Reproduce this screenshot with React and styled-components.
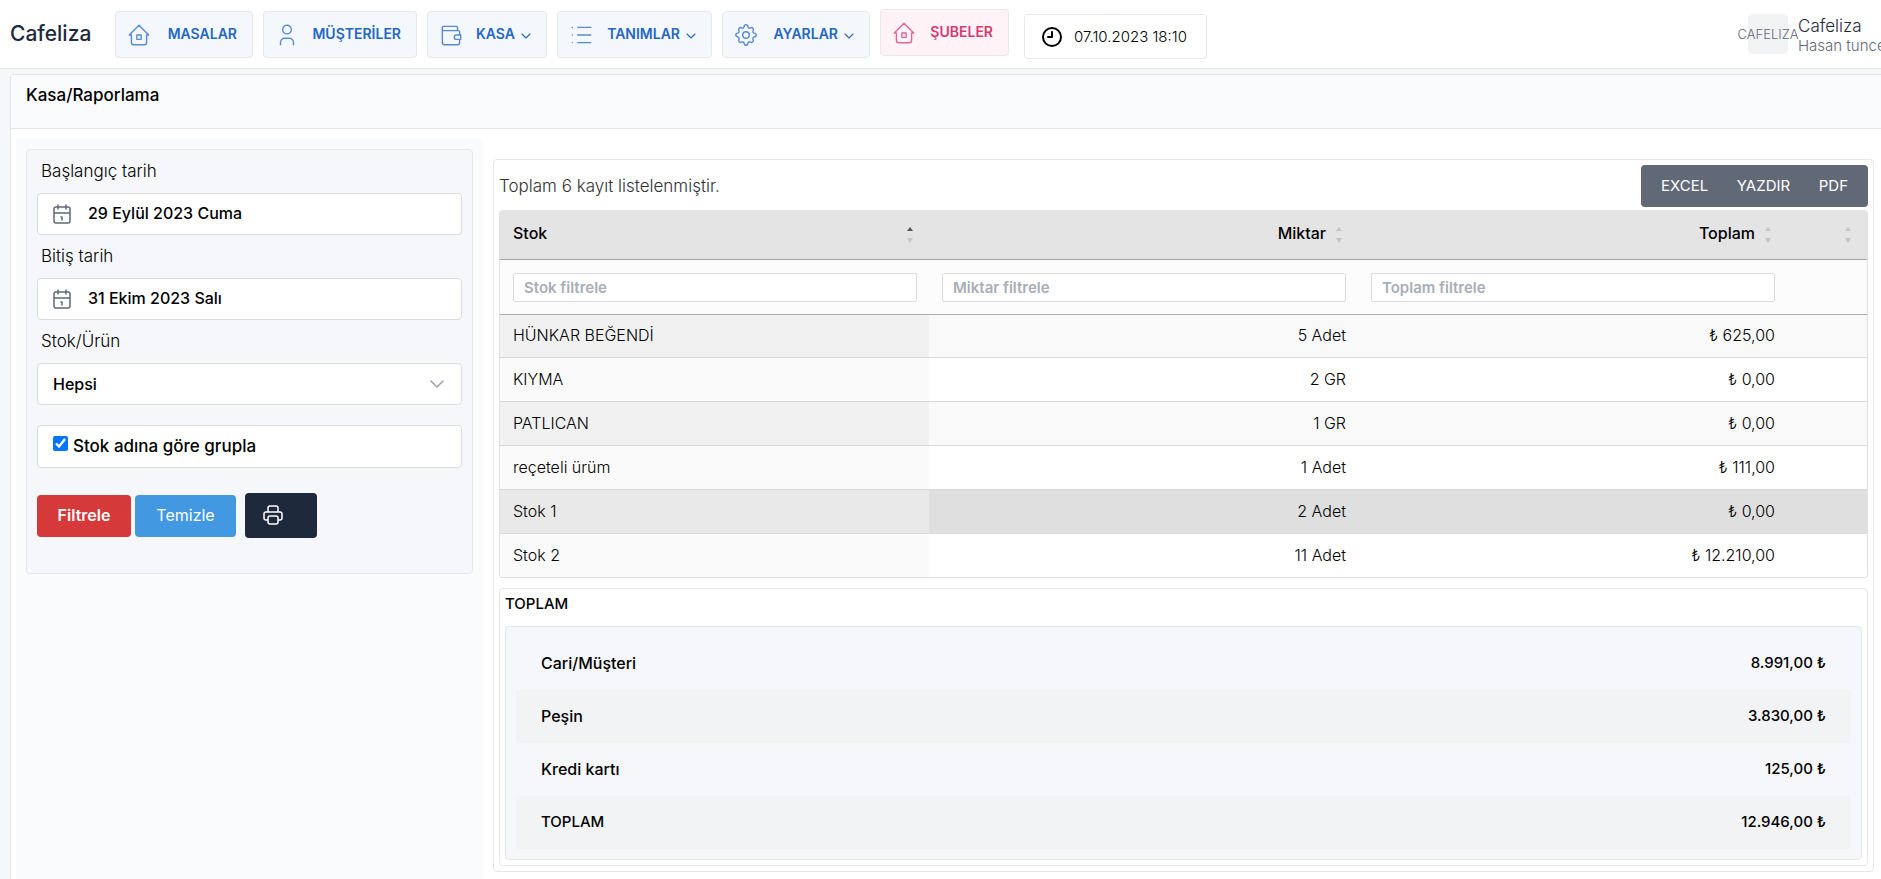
import React from "react";
import styled, { createGlobalStyle } from "styled-components";

const GlobalStyle = createGlobalStyle`
  * {
    box-sizing: border-box;
  }

  body {
    margin: 0;
    background: #f5f7fb;
    color: #000;
    font-family: Inter, "Noto Sans", sans-serif;
    font-size: 15px;
    font-weight: 300;
    line-height: 24px;
    overflow: hidden;
  }

  button, input, select {
    font: inherit;
    color: inherit;
  }
`;

const Icon = styled.svg`
  flex: none;
  width: ${(p) => p.$size || 24}px;
  height: ${(p) => p.$size || 24}px;
  fill: none;
  stroke: currentColor;
  stroke-width: ${(p) => p.$stroke || 1};
  stroke-linecap: round;
  stroke-linejoin: round;
`;

const Topbar = styled.header`
  display: flex;
  align-items: flex-start;
  height: 69px;
  padding: 9px 0 0 10px;
  background: #fff;
  border-bottom: 1px solid #e3e4e8;
`;

const Brand = styled.a`
  width: 105px;
  margin-top: 13px;
  color: #1e293b;
  font-size: 21px;
  font-weight: 500;
  text-decoration: none;
`;

const Nav = styled.nav`
  display: flex;
  gap: 10px;
`;

const NavItem = styled.a`
  display: flex;
  align-items: center;
  width: ${(p) => p.$width}px;
  height: 47px;
  margin-top: ${(p) => (p.$active ? 0 : 2)}px;
  padding: 0 12px 0 10px;
  border: 1px solid #e6e8ec;
  border-radius: 4px;
  background: ${(p) => (p.$active ? "#fff3f7" : "#f4f7fc")};
  color: ${(p) => (p.$active ? "#d63970" : "#2467c4")};
  font-size: 14px;
  font-weight: 600;
  text-decoration: none;

  > svg:first-child {
    opacity: 0.75;
  }
`;

const NavText = styled.span`
  flex: 1;
  display: flex;
  align-items: center;
  justify-content: flex-end;
  gap: 3px;
  padding-right: ${(p) => (p.$more ? 0 : 3)}px;
  padding-bottom: 2px;
  white-space: nowrap;

  svg {
    margin-top: 4px;
  }
`;

const Clock = styled.div`
  display: flex;
  align-items: center;
  gap: 10px;
  width: 183px;
  height: 45px;
  margin: 5px 0 0 15px;
  padding-left: 15px;
  border: 1px solid #e6e8ec;
  border-radius: 4px;
  white-space: nowrap;

  svg {
    color: #000;
  }
`;

const User = styled.div`
  display: flex;
  gap: 10px;
  width: 133px;
  margin: 5px 0 0 auto;
  white-space: nowrap;
`;

const Avatar = styled.span`
  display: flex;
  flex: none;
  align-items: center;
  justify-content: center;
  width: 40px;
  height: 40px;
  border-radius: 4px;
  background: #f1f3f5;
  color: #626976;
  font-size: 13px;
`;

const UserText = styled.div`
  padding-top: 2px;
  color: #1e293b;
  font-size: 17px;
  line-height: 20px;
`;

const UserRole = styled.div`
  color: #626976;
  font-size: 15px;
`;

const Page = styled.main`
  min-height: calc(100vh - 74px);
  margin: 5px 0 0 10px;
  border: 1px solid #e3e4e8;
  border-width: 1px 0 0 1px;
  border-radius: 4px 0 0 0;
  background: #fff;
`;

const PageTitle = styled.h1`
  height: 54px;
  margin: 0;
  padding: 8px 15px;
  border-bottom: 1px solid #e3e4e8;
  background: #fafbfd;
  font-size: 17px;
  font-weight: 500;
`;

const Columns = styled.div`
  display: grid;
  grid-template-columns: 467px 1fr;
  gap: 10px;
  min-height: calc(100vh - 129px);
  padding: 10px 7px 0 5px;
`;

const Side = styled.aside`
  padding: 10px;
  background: #fafbfd;
`;

const FilterForm = styled.form`
  display: flex;
  flex-direction: column;
  height: 425px;
  padding: 9px 10px;
  border: 1px solid #e6e7e9;
  border-radius: 4px;
  background: #f5f7fb;
`;

const Label = styled.label`
  padding: 0 4px;
  margin-bottom: 10px;
  font-size: 17px;
`;

const Field = styled.div`
  display: flex;
  align-items: center;
  gap: 14px;
  height: 42px;
  margin-bottom: 9px;
  padding: 0 12px;
  border: 1px solid #dadcde;
  border-radius: 4px;
  background: #fff;
  color: ${(p) => (p.$light ? "#9aa0ac" : "#626976")};
`;

const DateInput = styled.input`
  flex: 1;
  min-width: 0;
  padding: 0 0 2px;
  border: 0;
  outline: 0;
  background: none;
  color: #000;
  font-size: 16px;
  font-weight: 500;
`;

const Select = styled.select`
  flex: 1;
  appearance: none;
  padding: 0 3px;
  border: 0;
  background: none;
  color: #000;
  font-size: 16px;
  font-weight: 500;
`;

const CheckField = styled.label`
  display: flex;
  align-items: center;
  gap: 5px;
  height: 43px;
  margin: 11px 0 25px;
  padding: 0 15px 2px;
  border: 1px solid #dadcde;
  border-radius: 4px;
  background: #fff;
  font-size: 17px;
  font-weight: 500;
`;

const Checkbox = styled.input`
  width: 15px;
  height: 15px;
  margin: 0 0 5px;
  accent-color: #0075ff;
`;

const Buttons = styled.div`
  display: flex;
  align-items: center;
  gap: 4px;
`;

const Button = styled.button`
  width: ${(p) => p.$width}px;
  height: 42px;
  padding: 0 0 2px;
  border: 0;
  border-radius: 4px;
  background: ${(p) => p.$color};
  color: #fff;
  font-size: 16px;
  font-weight: ${(p) => (p.$strong ? 600 : 400)};
`;

const PrintButton = styled(Button)`
  height: 45px;
  margin-left: 5px;
  padding: 4px 0 0 16px;
  text-align: left;
`;

const Report = styled.section`
  align-self: start;
  margin-top: 20px;
  padding: 5px;
  border: 1px solid #e6e7e9;
  border-radius: 4px;
`;

const ReportHead = styled.div`
  display: flex;
  align-items: center;
  justify-content: space-between;
  margin-bottom: 3px;
  color: #333;
  font-size: 17px;
`;

const Exports = styled.div`
  display: flex;
  align-items: center;
  justify-content: space-between;
  width: 227px;
  height: 42px;
  padding: 0 20px;
  border-radius: 4px;
  background: #626976;
  font-size: 15px;
`;

const ExportButton = styled.button`
  padding: 0;
  border: 0;
  background: none;
  color: #fff;
  font-weight: 400;
`;

const TableWrap = styled.div`
  overflow: hidden;
  border: 1px solid #e0e1e3;
  border-top: 0;
  border-radius: 4px;
`;

const Table = styled.table`
  width: 100%;
  table-layout: fixed;
  border-collapse: separate;
  border-spacing: 0;
`;

const Th = styled.th`
  height: 50px;
  padding: 0 12px 0 13px;
  border-bottom: 1px solid #a3a3a3;
  background: #e4e4e4;
  font-size: 16px;
  font-weight: 500;
`;

const ThInner = styled.div`
  display: flex;
  align-items: center;
  justify-content: ${(p) => p.$justify};
  gap: 10px;
  padding: 0 4px 3px 0;
`;

const Sort = styled.span`
  display: flex;
  flex-direction: column;
  gap: 7px;
  padding-top: 4px;

  &::before,
  &::after {
    content: "";
    border: 3px solid transparent;
  }

  &::before {
    border-top: 0;
    border-bottom: 4px solid ${(p) => (p.$asc ? "#555" : "#c4c4c4")};
  }

  &::after {
    border-bottom: 0;
    border-top: 5px solid #c4c4c4;
  }
`;

const FilterCell = styled.td`
  height: 55px;
  padding: 0 12px 0 13px;
  border-bottom: 1px solid #ababab;
  background: #fcfcfc;
`;

const FilterInput = styled.input`
  display: block;
  width: 100%;
  height: 29px;
  padding: 0 10px;
  border: 1px solid #dadcde;
  border-radius: 2px;
  background: #fff;
  font-size: 15px;
  font-weight: 600;

  &::placeholder {
    color: #a8aeb7;
    opacity: 1;
  }
`;

const Row = styled.tr`
  background: ${(p) => (p.$hover ? "#dfdfdf" : "#fff")};

  &:nth-child(odd) {
    background: ${(p) => (p.$hover ? "#dfdfdf" : "#f9f9f9")};
  }

  &:not(:last-child) td {
    border-bottom: 1px solid #d9d9d9;
  }

  &:first-child td,
  &:last-child td {
    height: 43px;
  }
`;

const Cell = styled.td`
  height: 44px;
  padding: 0 12px 2px 13px;
  font-size: 16px;
  text-align: right;

  &:first-child {
    text-align: left;
    background: ${(p) => p.$bg};
  }
`;

const Totals = styled.section`
  margin-top: 10px;
  padding: 3px 5px 5px;
  border: 1px solid #e6e7e9;
  border-radius: 4px;
  font-weight: 500;
`;

const TotalsTitle = styled.h2`
  margin: 0 0 10px;
  font-size: 15px;
  font-weight: 500;
`;

const TotalsList = styled.dl`
  margin: 0;
  padding: 10px;
  border: 1px solid #e6e7e9;
  border-radius: 4px;
  background: #f5f7fb;
`;

const TotalRow = styled.div`
  display: flex;
  align-items: center;
  justify-content: space-between;
  height: 53px;
  padding: 0 25px 2px;

  &:nth-child(even) {
    background: #f1f3f5;
  }

  dt {
    font-size: ${(p) => (p.$sum ? 15 : 16)}px;
  }

  dd {
    margin: 0;
  }
`;

const paths = {
  home: "M5 12H3l9-9 9 9h-2M5 12v7a2 2 0 0 0 2 2h10a2 2 0 0 0 2-2v-7M10 12h4v4h-4z",
  user: "M12 3a4 4 0 1 0 0 8 4 4 0 0 0 0-8M6 21v-2a4 4 0 0 1 4-4h4a4 4 0 0 1 4 4v2",
  wallet:
    "M18 8V5a1 1 0 0 0-1-1H5a1 1 0 0 0-1 1v14a2 2 0 0 0 2 2h12a2 2 0 0 0 2-2v-3M4 8h15a1 1 0 0 1 1 1v3M21 12v4h-4a2 2 0 0 1 0-4z",
  list: "M9 5h12M9 12h12M9 19h12M4 5v.01M4 12v.01M4 19v.01",
  gear: "M10.3 4.3a1.7 1.7 0 0 1 3.4 0 1.7 1.7 0 0 0 2.6 1.1 1.7 1.7 0 0 1 2.3 2.3 1.7 1.7 0 0 0 1.1 2.6 1.7 1.7 0 0 1 0 3.4 1.7 1.7 0 0 0-1.1 2.6 1.7 1.7 0 0 1-2.3 2.3 1.7 1.7 0 0 0-2.6 1.1 1.7 1.7 0 0 1-3.4 0 1.7 1.7 0 0 0-2.6-1.1 1.7 1.7 0 0 1-2.3-2.3 1.7 1.7 0 0 0-1.1-2.6 1.7 1.7 0 0 1 0-3.4 1.7 1.7 0 0 0 1.1-2.6 1.7 1.7 0 0 1 2.3-2.3 1.7 1.7 0 0 0 2.6-1.1M12 9a3 3 0 1 0 0 6 3 3 0 0 0 0-6",
  clock: "M12 3a9 9 0 1 0 0 18 9 9 0 0 0 0-18M12 7v5H8",
  chevron: "M6 9l6 6 6-6",
  calendar:
    "M6 5h12a2 2 0 0 1 2 2v12a2 2 0 0 1-2 2H6a2 2 0 0 1-2-2V7a2 2 0 0 1 2-2M16 3v4M8 3v4M4 11h16M11 15h1v3",
  printer:
    "M17 17h2a2 2 0 0 0 2-2v-4a2 2 0 0 0-2-2H5a2 2 0 0 0-2 2v4a2 2 0 0 0 2 2h2M17 9V5a2 2 0 0 0-2-2H9a2 2 0 0 0-2 2v4M9 13h6a2 2 0 0 1 2 2v4a2 2 0 0 1-2 2H9a2 2 0 0 1-2-2v-4a2 2 0 0 1 2-2",
};

function Glyph({ name, size, stroke }) {
  return (
    <Icon viewBox="0 0 24 24" $size={size} $stroke={stroke} aria-hidden="true">
      <path d={paths[name]} />
    </Icon>
  );
}

const menu = [
  { text: "MASALAR", icon: "home", width: 138 },
  { text: "MÜŞTERİLER", icon: "user", width: 154 },
  { text: "KASA", icon: "wallet", width: 120, more: true },
  { text: "TANIMLAR", icon: "list", width: 155, more: true },
  { text: "AYARLAR", icon: "gear", width: 148, more: true },
  { text: "ŞUBELER", icon: "home", width: 129, active: true },
];

const rows = [
  ["HÜNKAR BEĞENDİ", "5 Adet", "₺ 625,00"],
  ["KIYMA", "2 GR", "₺ 0,00"],
  ["PATLICAN", "1 GR", "₺ 0,00"],
  ["reçeteli ürüm", "1 Adet", "₺ 111,00"],
  ["Stok 1", "2 Adet", "₺ 0,00"],
  ["Stok 2", "11 Adet", "₺ 12.210,00"],
];

const totals = [
  ["Cari/Müşteri", "8.991,00 ₺"],
  ["Peşin", "3.830,00 ₺"],
  ["Kredi kartı", "125,00 ₺"],
  ["TOPLAM", "12.946,00 ₺"],
];

const hovered = 4;

function firstCellColor(i) {
  if (i === hovered) return "#e9e9e9";
  return i % 2 === 0 ? "#f1f1f1" : "#fafafa";
}

function Header() {
  return (
    <Topbar>
      <Brand href="#">Cafeliza</Brand>
      <Nav>
        {menu.map((m) => (
          <NavItem key={m.text} href="#" $width={m.width} $active={m.active}>
            <Glyph name={m.icon} size={26} stroke={1.3} />
            <NavText $more={m.more}>
              {m.text}
              {m.more && <Glyph name="chevron" size={16} stroke={1.6} />}
            </NavText>
          </NavItem>
        ))}
      </Nav>
      <Clock>
        <Glyph name="clock" stroke={2} />
        07.10.2023 18:10
      </Clock>
      <User>
        <Avatar>CAFELIZA</Avatar>
        <UserText>
          Cafeliza
          <UserRole>Hasan tuncer</UserRole>
        </UserText>
      </User>
    </Topbar>
  );
}

function Filters() {
  return (
    <FilterForm>
      <Label htmlFor="start">Başlangıç tarih</Label>
      <Field>
        <Glyph name="calendar" stroke={1.5} />
        <DateInput id="start" type="text" defaultValue="29 Eylül 2023 Cuma" />
      </Field>
      <Label htmlFor="end">Bitiş tarih</Label>
      <Field>
        <Glyph name="calendar" stroke={1.5} />
        <DateInput id="end" type="text" defaultValue="31 Ekim 2023 Salı" />
      </Field>
      <Label htmlFor="stock">Stok/Ürün</Label>
      <Field $light>
        <Select id="stock">
          <option>Hepsi</option>
        </Select>
        <Glyph name="chevron" stroke={1.5} />
      </Field>
      <CheckField>
        <Checkbox type="checkbox" defaultChecked />
        Stok adına göre grupla
      </CheckField>
      <Buttons>
        <Button type="button" $width={94} $color="#d63939" $strong>
          Filtrele
        </Button>
        <Button type="button" $width={101} $color="#4299e1">
          Temizle
        </Button>
        <PrintButton type="button" $width={72} $color="#1e293b" aria-label="Yazdır">
          <Glyph name="printer" stroke={1.5} />
        </PrintButton>
      </Buttons>
    </FilterForm>
  );
}

function StockTable() {
  return (
    <TableWrap>
      <Table>
        <colgroup>
          <col />
          <col />
          <col />
          <col width="80" />
        </colgroup>
        <thead>
          <tr>
            <Th>
              <ThInner $justify="space-between">
                Stok <Sort $asc />
              </ThInner>
            </Th>
            <Th>
              <ThInner $justify="flex-end">
                Miktar <Sort />
              </ThInner>
            </Th>
            <Th>
              <ThInner $justify="flex-end">
                Toplam <Sort />
              </ThInner>
            </Th>
            <Th aria-label="İşlem">
              <ThInner $justify="flex-end">
                <Sort />
              </ThInner>
            </Th>
          </tr>
          <tr>
            {["Stok", "Miktar", "Toplam"].map((name) => (
              <FilterCell key={name}>
                <FilterInput
                  type="text"
                  placeholder={`${name} filtrele`}
                  aria-label={`${name} filtrele`}
                />
              </FilterCell>
            ))}
            <FilterCell />
          </tr>
        </thead>
        <tbody>
          {rows.map((row, i) => (
            <Row key={row[0]} $hover={i === hovered}>
              {row.map((text, j) => (
                <Cell key={j} $bg={firstCellColor(i)}>
                  {text}
                </Cell>
              ))}
              <Cell />
            </Row>
          ))}
        </tbody>
      </Table>
    </TableWrap>
  );
}

function App() {
  return (
    <>
      <GlobalStyle />
      <Header />
      <Page>
        <PageTitle>Kasa/Raporlama</PageTitle>
        <Columns>
          <Side>
            <Filters />
          </Side>
          <Report>
            <ReportHead>
              Toplam 6 kayıt listelenmiştir.
              <Exports>
                <ExportButton>EXCEL</ExportButton>
                <ExportButton>YAZDIR</ExportButton>
                <ExportButton>PDF</ExportButton>
              </Exports>
            </ReportHead>
            <StockTable />
            <Totals>
              <TotalsTitle>TOPLAM</TotalsTitle>
              <TotalsList>
                {totals.map(([name, amount]) => (
                  <TotalRow key={name} $sum={name === "TOPLAM"}>
                    <dt>{name}</dt>
                    <dd>{amount}</dd>
                  </TotalRow>
                ))}
              </TotalsList>
            </Totals>
          </Report>
        </Columns>
      </Page>
    </>
  );
}

export default App;
